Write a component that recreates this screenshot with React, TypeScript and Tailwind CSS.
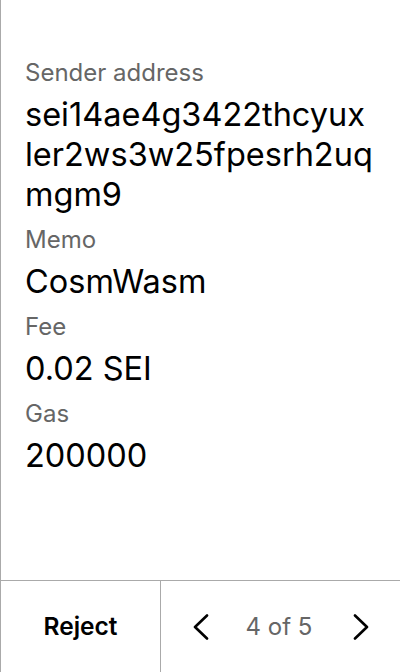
import React from 'react'

type Field = {
  label: string
  lines: string[]
}

// address is split the way the reference wraps it
const fields: Field[] = [
  { label: 'Sender address', lines: ['sei14ae4g3422thcyux', 'ler2ws3w25fpesrh2uq', 'mgm9'] },
  { label: 'Memo', lines: ['CosmWasm'] },
  { label: 'Fee', lines: ['0.02 SEI'] },
  { label: 'Gas', lines: ['200000'] },
]

function Chevron({ dir }: { dir: 'left' | 'right' }) {
  const points = dir === 'left' ? '14,1.5 2,13 14,24.5' : '2,1.5 14,13 2,24.5'
  return (
    <svg width="16" height="26" viewBox="0 0 16 26" fill="none">
      <polyline points={points} stroke="#000" strokeWidth="2.6" strokeLinecap="round" strokeLinejoin="round" />
    </svg>
  )
}

export default function App() {
  return (
    <div
      className="w-[400px] h-[672px] flex flex-col bg-white border-l border-[#aaaaaa] text-black"
      style={{ fontFamily: 'Inter, "Noto Sans", sans-serif' }}
    >
      <div className="flex-1 flex flex-col pl-6 pr-6 pt-[57px]">
        {fields.map((f) => (
          <div key={f.label} className="mb-[9px]">
            <div className="text-[24px] leading-[32px] text-[#666666] mb-[6px]">{f.label}</div>
            <div className="text-[32.5px] leading-[40px] break-all">
              {f.lines.map((l) => (
                <span key={l} className="block">
                  {l}
                </span>
              ))}
            </div>
          </div>
        ))}
      </div>

      <div className="h-[92px] flex border-t border-[#aaaaaa]">
        <button className="w-[160px] flex items-center justify-center border-r border-[#aaaaaa] text-[24.5px] font-semibold">
          Reject
        </button>
        <div className="flex-1 flex items-center justify-between pl-[32px] pr-[31px]">
          <button className="flex items-center">
            <Chevron dir="left" />
          </button>
          <span className="text-[24px] text-[#666666] -translate-x-[2px]">4 of 5</span>
          <button className="flex items-center">
            <Chevron dir="right" />
          </button>
        </div>
      </div>
    </div>
  )
}
